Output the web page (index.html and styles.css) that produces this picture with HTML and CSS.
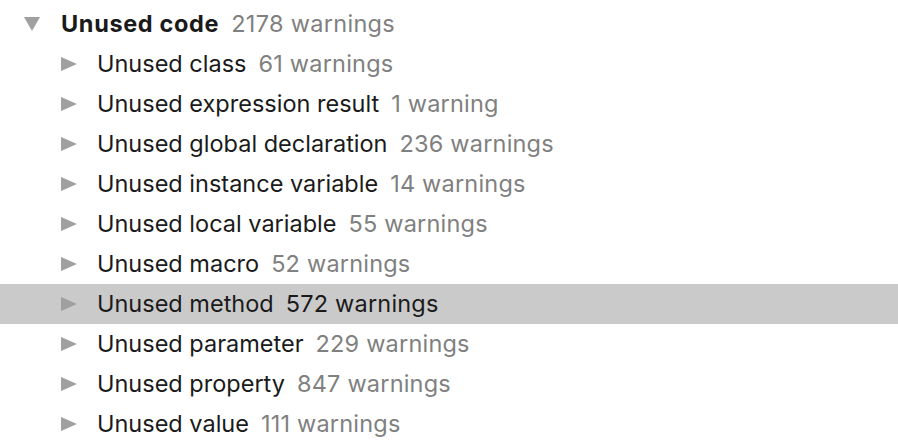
FILE: index.html
```html
<!DOCTYPE html>
<html>
<head>
<meta charset="utf-8">
<link rel="stylesheet" href="styles.css">
</head>
<body>
<div class="tree">
  <div class="row top"><span class="tri down"></span><span class="name">Unused code</span><span class="count">2178 warnings</span></div>
  <div class="row child"><span class="tri right"></span><span class="name">Unused class</span><span class="count">61 warnings</span></div>
  <div class="row child"><span class="tri right"></span><span class="name">Unused expression result</span><span class="count">1 warning</span></div>
  <div class="row child"><span class="tri right"></span><span class="name">Unused global declaration</span><span class="count">236 warnings</span></div>
  <div class="row child"><span class="tri right"></span><span class="name">Unused instance variable</span><span class="count">14 warnings</span></div>
  <div class="row child"><span class="tri right"></span><span class="name">Unused local variable</span><span class="count">55 warnings</span></div>
  <div class="row child"><span class="tri right"></span><span class="name">Unused macro</span><span class="count">52 warnings</span></div>
  <div class="row child selected"><span class="tri right"></span><span class="name">Unused method</span><span class="count">572 warnings</span></div>
  <div class="row child"><span class="tri right"></span><span class="name">Unused parameter</span><span class="count">229 warnings</span></div>
  <div class="row child"><span class="tri right"></span><span class="name">Unused property</span><span class="count">847 warnings</span></div>
  <div class="row child"><span class="tri right"></span><span class="name">Unused value</span><span class="count">111 warnings</span></div>
</div>
</body>
</html>
```
FILE: styles.css
```css
html, body {
  margin: 0;
  padding: 0;
  background: #ffffff;
}
body {
  font-family: "Inter", "Liberation Sans", sans-serif;
  font-size: 23.5px;
  color: #1a1a1a;
}
.tree {
  padding-top: 4px;
  display: flex;
  flex-direction: column;
}
.row {
  height: 40px;
  display: flex;
  align-items: center;
  white-space: nowrap;
}
.row.top {
  padding-left: 24px;
}
.row.child {
  padding-left: 61px;
}
.row.selected {
  background: #cacaca;
}
.tri {
  width: 0;
  height: 0;
  flex: none;
}
.tri.down {
  border-left: 8.5px solid transparent;
  border-right: 8.5px solid transparent;
  border-top: 14px solid #a0a0a0;
  margin-right: 21px;
}
.tri.right {
  border-top: 7px solid transparent;
  border-bottom: 7px solid transparent;
  border-left: 16px solid #a0a0a0;
  margin-right: 20px;
}
.name,
.count {
  margin-bottom: 2px;
}
.name {
  margin-right: 12px;
}
.top .name {
  font-weight: 700;
  letter-spacing: 0.65px;
}
.count {
  color: #808080;
  letter-spacing: 0.2px;
}
.top .count {
  letter-spacing: 0.3px;
}
.selected .count {
  color: #1a1a1a;
}
```
